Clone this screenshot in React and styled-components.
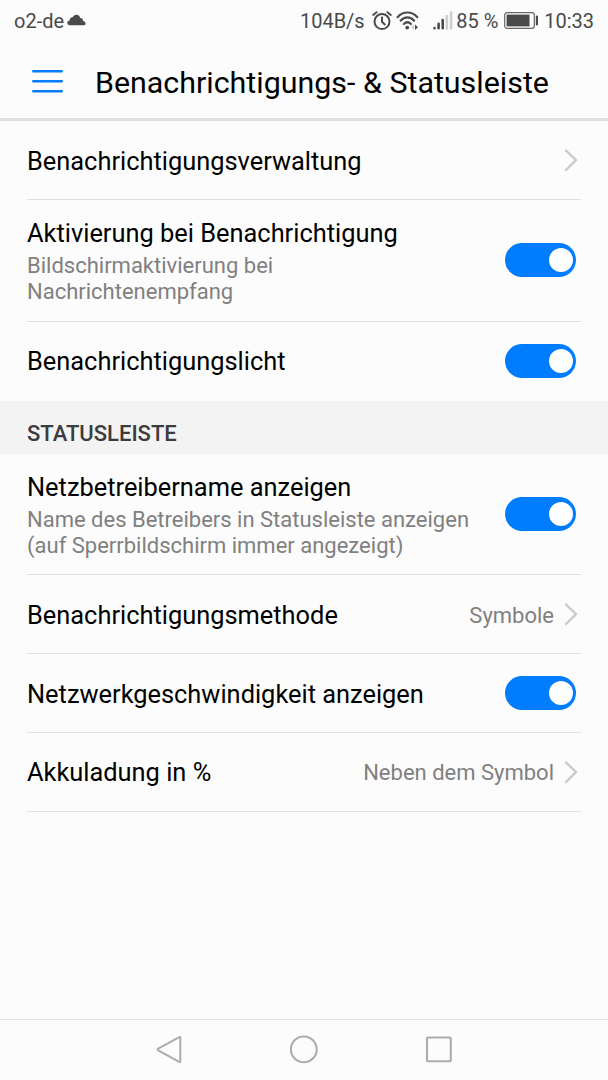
import React, { useState } from "react"
import styled, { createGlobalStyle } from "styled-components"

const GlobalStyle = createGlobalStyle`
  * {
    box-sizing: border-box;
  }

  body {
    margin: 0;
    background: #fcfcfc;
    font-family: Roboto, "Noto Sans", sans-serif;
  }
`

/* Page wrappers */
const Screen = styled.div`
  display: flex;
  flex-direction: column;
  width: 608px;
  height: 1080px;
  overflow: hidden;
  background: #fcfcfc;
  color: #000;
`

const StatusBar = styled.div`
  display: flex;
  align-items: center;
  flex: none;
  height: 42px;
  padding: 0 14px;
  color: #4a4a4a;
  font-size: 20px;
  line-height: 24px;
  white-space: nowrap;

  svg {
    display: block;
    flex: none;
  }
`

const StatusText = styled.span`
  margin-left: ${props => props.$left || "0"};
`

const StatusIcon = styled.span`
  margin-left: ${props => props.$left || "0"};
`

const Spacer = styled.div`
  flex: 1;
`

const Header = styled.header`
  display: flex;
  align-items: center;
  flex: none;
  height: 79px;
  padding: 2px 32px 0;
  border-bottom: 3px solid #e0e0e0;
`

const MenuButton = styled.button`
  width: 31px;
  height: 23px;
  margin-right: 32px;
  padding: 0;
  border: 0;
  background: none;
`

const MenuIcon = styled.svg`
  display: block;
  width: 31px;
  height: 23px;
`

const Title = styled.h1`
  margin: 4px 0 0;
  font-size: 30.4px;
  font-weight: 400;
  line-height: 36px;
  white-space: nowrap;
`

/* Settings list */
const List = styled.div`
  flex: 1;
`

const Row = styled.div`
  display: flex;
  align-items: center;
  height: ${props => props.$height || 79}px;
  margin: 0 27px;
  padding-bottom: ${props => props.$lift || 0}px;
  border-bottom: ${props => (props.$last ? "0" : "1px solid #e2e2e2")};
`

const Labels = styled.div`
  flex: 1;
  padding-top: ${props => (props.$tall ? "3px" : "1px")};
`

const Label = styled.div`
  font-size: 25.4px;
  line-height: 30px;
  white-space: nowrap;
`

const Description = styled.div`
  margin-top: 5px;
  color: #808080;
  font-size: 22px;
  line-height: 26px;
  white-space: pre-line;
`

const Value = styled.span`
  margin: 3px 10px 0 0;
  color: #808080;
  font-size: 22px;
  line-height: 26px;
`

const Arrow = styled.svg`
  display: block;
  flex: none;
  width: 14px;
  height: 24px;
  margin-right: 3px;
`

const Section = styled.h2`
  display: flex;
  align-items: center;
  height: 53px;
  margin: 0;
  padding: 12px 27px 0;
  background: #f3f3f3;
  color: #3c3c3c;
  font-size: 22px;
  font-weight: 500;
  line-height: 26px;
`

const Track = styled.button`
  display: flex;
  justify-content: ${props => (props.$on ? "flex-end" : "flex-start")};
  align-items: center;
  flex: none;
  width: 71px;
  height: 34px;
  margin-right: 5px;
  padding: 0 3.5px;
  border: 0;
  border-radius: 17px;
  background: ${props => (props.$on ? "#007dff" : "#c8c8c8")};
`

const Thumb = styled.span`
  width: 24px;
  height: 24px;
  border-radius: 50%;
  background: #fff;
`

const NavBar = styled.nav`
  display: flex;
  justify-content: center;
  align-items: center;
  gap: 105px;
  flex: none;
  height: 61px;
  border-top: 1px solid #e4e4e4;

  svg {
    display: block;
    width: 30px;
    height: 30px;
    fill: none;
    stroke: #adadad;
    stroke-width: 2.1;
    stroke-linejoin: round;
  }
`

function Switch() {
  const [on, setOn] = useState(true)
  return (
    <Track type="button" role="switch" aria-checked={on} $on={on} onClick={() => setOn(!on)}>
      <Thumb />
    </Track>
  )
}

function Chevron() {
  return (
    <Arrow viewBox="0 0 14 24">
      <path
        d="M2 2.5 L12 12.2 L2 22"
        fill="none"
        stroke="#cacaca"
        strokeWidth="2.4"
        strokeLinecap="round"
        strokeLinejoin="round"
      />
    </Arrow>
  )
}

/**
 * One line of the list, with either a switch or an arrow at its end
 */
function Setting({ label, description, value, toggle, height, lift, last }) {
  return (
    <Row $height={height} $lift={lift} $last={last}>
      <Labels $tall={Boolean(description)}>
        <Label>{label}</Label>
        {description && <Description>{description}</Description>}
      </Labels>
      {value && <Value>{value}</Value>}
      {toggle ? <Switch /> : <Chevron />}
    </Row>
  )
}

function CloudIcon() {
  return (
    <svg width="19" height="14" viewBox="0 0 19 14">
      <path
        d="M3 11.2 C-.6 11.2-.4 6.8 2.7 6.6 C2.7 3.8 4.6 3 5.7 3.3 C7-.5 12.6-.2 13.2 4 C15.4 4 16.1 5.4 16 7 C19.4 7.4 19.2 11.2 17 11.2 Z"
        fill="#4a4a4a"
      />
    </svg>
  )
}

function AlarmIcon() {
  return (
    <svg width="20" height="20" viewBox="0 0 20 20" fill="none" stroke="#4a4a4a" strokeLinecap="round">
      <circle cx="10" cy="10.6" r="7.5" strokeWidth="2" />
      <path d="M10 6.4 V10.8 L12.8 13.4" strokeWidth="2" />
      <path d="M1.2 4 L4.6 1.2 M18.8 4 L15.4 1.2" strokeWidth="1.9" />
    </svg>
  )
}

function WifiIcon() {
  return (
    <svg width="23" height="20" viewBox="0 0 23 20" fill="none" stroke="#4a4a4a" strokeLinecap="round">
      <path d="M1.5 6.2 C7-.1 16-.1 21.3 6.2" strokeWidth="2.1" />
      <path d="M4.6 9.7 C8.6 5.2 14.2 5.2 18.2 9.7" strokeWidth="2.1" />
      <path d="M7.8 13 C10 10.8 12.8 10.8 15 13" strokeWidth="2.1" />
      <circle cx="11.2" cy="16.6" r="1.9" fill="#4a4a4a" stroke="none" />
      <path d="M18 13.4 V19 L15 16.2 Z" fill="#cfcfcf" stroke="none" />
      <path d="M19 13.4 V19 L22 16.2 Z" fill="#4a4a4a" stroke="none" />
    </svg>
  )
}

function SignalIcon() {
  return (
    <svg width="20" height="21" viewBox="0 0 20 21" strokeWidth="2.6" strokeLinecap="round">
      <path d="M1.5 17 V17.3 M5.6 12.8 V17.3 M9.7 9 V17.3" stroke="#4a4a4a" />
      <path d="M13.8 4.1 V18.5 M18.1 .4 V18.5" stroke="#cecece" strokeLinecap="butt" />
    </svg>
  )
}

function BatteryIcon() {
  return (
    <svg width="35" height="19" viewBox="0 0 35 19">
      <rect x=".7" y=".7" width="29.6" height="15.6" rx="2.4" fill="none" stroke="#666" strokeWidth="1.2" />
      <rect x="2.6" y="2.6" width="22.9" height="11.8" fill="#4a4a4a" />
      <rect x="31.8" y="3.6" width="2.2" height="9.8" rx="1" fill="#4a4a4a" />
    </svg>
  )
}

export default function App() {
  return (
    <Screen>
      <GlobalStyle />
      <StatusBar>
        <StatusText>o2-de</StatusText>
        <StatusIcon $left="3px"><CloudIcon /></StatusIcon>
        <Spacer />
        <StatusText>104B/s</StatusText>
        <StatusIcon $left="7px"><AlarmIcon /></StatusIcon>
        <StatusIcon $left="4px"><WifiIcon /></StatusIcon>
        <StatusIcon $left="14.6px"><SignalIcon /></StatusIcon>
        <StatusText $left="3px">85 %</StatusText>
        <StatusIcon $left="6px"><BatteryIcon /></StatusIcon>
        <StatusText $left="4.8px">10:33</StatusText>
      </StatusBar>

      <Header>
        <MenuButton type="button" aria-label="Menü">
          <MenuIcon viewBox="0 0 31 23" stroke="#007dff" strokeWidth="2.5" strokeLinecap="round">
            <path d="M1.3 1.3 H29.7 M1.3 11.3 H29.7 M1.3 21.3 H29.7" />
          </MenuIcon>
        </MenuButton>
        <Title>Benachrichtigungs- &amp; Statusleiste</Title>
      </Header>

      <List>
        <Setting label="Benachrichtigungsverwaltung" />
        <Setting
          label="Aktivierung bei Benachrichtigung"
          description={"Bildschirmaktivierung bei\nNachrichtenempfang"}
          height={122}
          lift={1}
          toggle
        />
        <Setting label="Benachrichtigungslicht" lift={2} toggle last />
        <Section>STATUSLEISTE</Section>
        <Setting
          label="Netzbetreibername anzeigen"
          description={"Name des Betreibers in Statusleiste anzeigen\n(auf Sperrbildschirm immer angezeigt)"}
          height={121}
          toggle
        />
        <Setting label="Benachrichtigungsmethode" value="Symbole" />
        <Setting label="Netzwerkgeschwindigkeit anzeigen" toggle />
        <Setting label="Akkuladung in %" value="Neben dem Symbol" lift={1} />
      </List>

      <NavBar>
        <svg viewBox="0 0 30 30">
          <path d="M25.3 2.1 Q26.3 1.6 26.3 2.6 V26.4 Q26.3 27.4 25.3 26.9 L4.2 15.4 Q3.1 14.5 4.2 13.6 Z" />
        </svg>
        <svg viewBox="0 0 30 30">
          <circle cx="14.8" cy="14.4" r="12.9" />
        </svg>
        <svg viewBox="0 0 30 30">
          <rect x="3" y="2.5" width="23.8" height="23.8" rx="1" />
        </svg>
      </NavBar>
    </Screen>
  )
}
